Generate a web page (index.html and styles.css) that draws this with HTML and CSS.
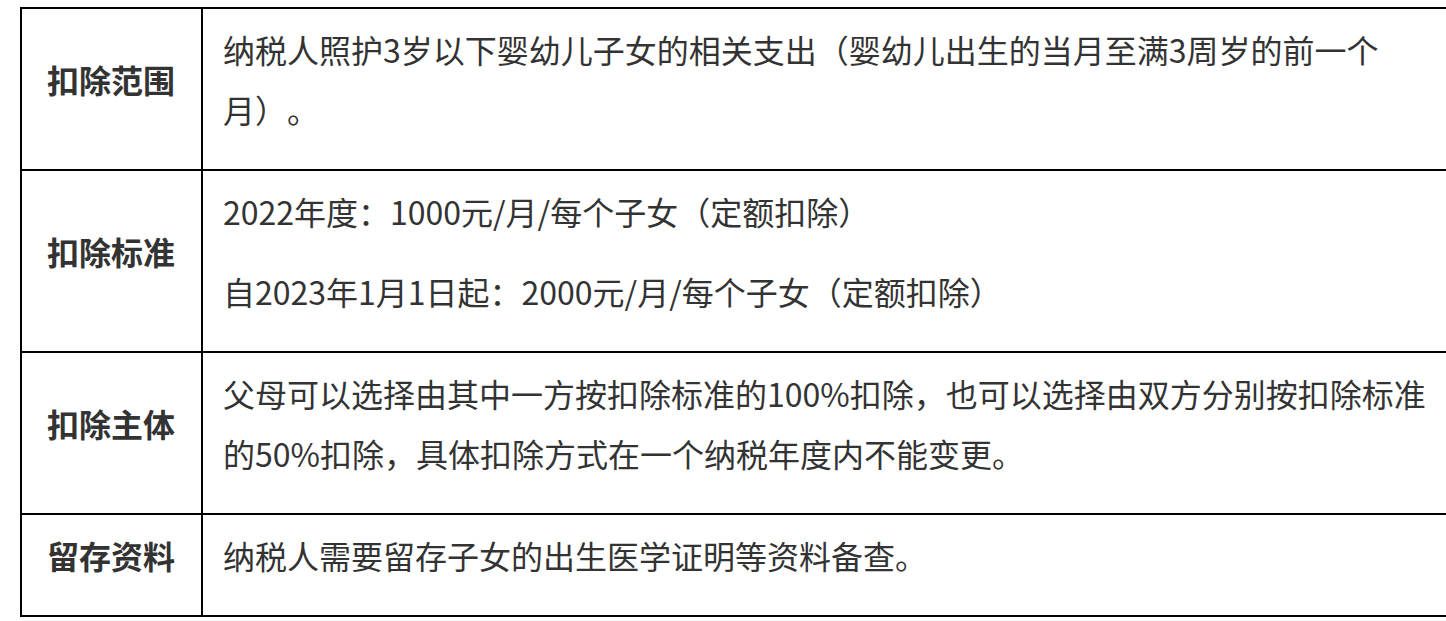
FILE: index.html
```html
<!DOCTYPE html>
<html lang="zh-CN">
<head>
<meta charset="utf-8">
<title>3岁以下婴幼儿照护</title>
<link rel="stylesheet" href="styles.css">
</head>
<body>
<table class="info-table">
  <colgroup>
    <col class="col-label">
    <col class="col-body">
  </colgroup>
  <tbody>
    <tr>
      <td class="label"><p>扣除范围</p></td>
      <td class="body"><p>纳税人照护3岁以下婴幼儿子女的相关支出（婴幼儿出生的当月至满3周岁的前一个月）。</p></td>
    </tr>
    <tr>
      <td class="label"><p>扣除标准</p></td>
      <td class="body">
        <p>2022年度：1000元/月/每个子女（定额扣除）</p>
        <p>自2023年1月1日起：2000元/月/每个子女（定额扣除）</p>
      </td>
    </tr>
    <tr>
      <td class="label"><p>扣除主体</p></td>
      <td class="body"><p>父母可以选择由其中一方按扣除标准的100%扣除，也可以选择由双方分别按扣除标准的50%扣除，具体扣除方式在一个纳税年度内不能变更。</p></td>
    </tr>
    <tr>
      <td class="label"><p>留存资料</p></td>
      <td class="body"><p>纳税人需要留存子女的出生医学证明等资料备查。</p></td>
    </tr>
  </tbody>
</table>
</body>
</html>
```

FILE: styles.css
```css
html, body {
  margin: 0;
  padding: 0;
  overflow: hidden;
  background: #fff;
}

body {
  font-family: "Noto Sans CJK SC", "Noto Sans", sans-serif;
  color: #333;
  font-size: 32px;
  line-height: 60px;
  text-spacing-trim: space-all;
}

.info-table {
  border-collapse: collapse;
  table-layout: fixed;
  width: 1442px;
  margin: 7px 0 0 20px;
}

.col-label {
  width: 181px;
}

.info-table td {
  border: 2px solid #000;
  padding: 10px 21px 10px 20px;
  vertical-align: middle;
}

.info-table p {
  margin: 0 0 20px 0;
}

.label {
  text-align: center;
  font-weight: bold;
  padding-left: 8px;
  padding-right: 8px;
}

.body {
  text-align: left;
}
```
